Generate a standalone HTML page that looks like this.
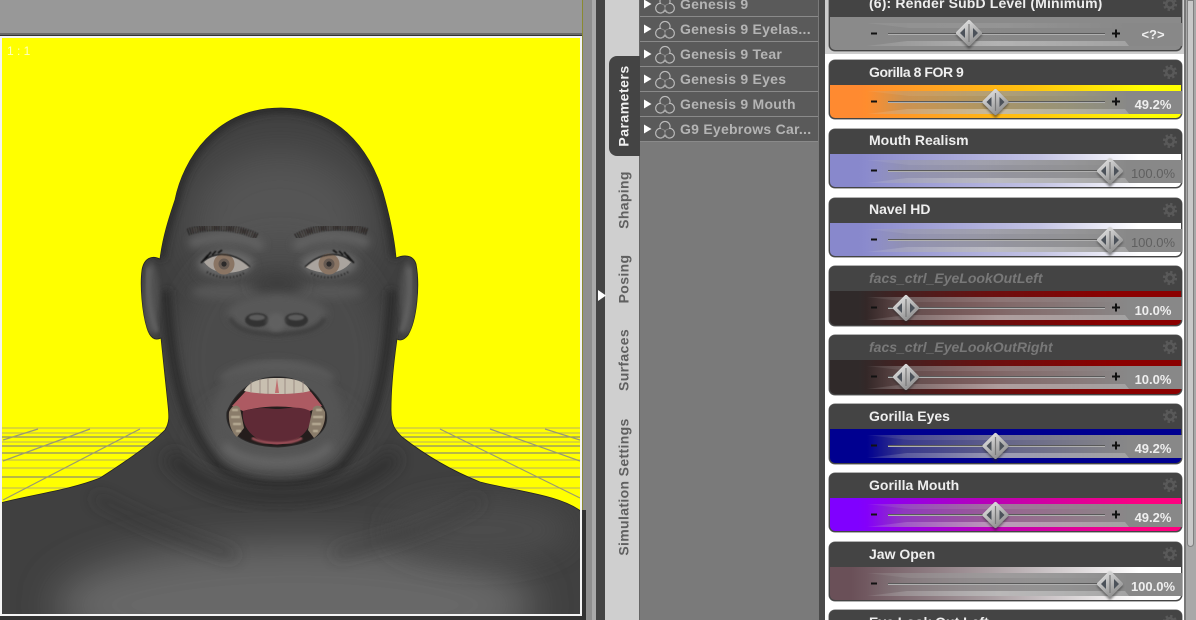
<!DOCTYPE html>
<html><head><meta charset="utf-8"><style>
html,body{margin:0;padding:0;width:1196px;height:620px;overflow:hidden}
body{position:relative;background:#999;font-family:"Liberation Sans",sans-serif}
#root{position:absolute;left:0;top:0;width:1196px;height:620px;overflow:hidden}
.a{position:absolute}
.row{position:absolute;left:640px;width:178px;height:24px;background:#5a5a5a;border-bottom:1px solid #8a8a8a}
.row b{position:absolute;left:40px;top:5px;font-size:14px;line-height:15px;color:#b4b4b4;letter-spacing:.25px;white-space:nowrap}
.row svg{position:absolute;left:3px;top:2px}
.tab{position:absolute;left:624px;transform:translate(-50%,-50%) rotate(-90deg);font-size:14px;font-weight:bold;color:#606060;white-space:nowrap;line-height:15px;letter-spacing:.35px}
.card{position:absolute;left:829px;width:353px;height:59px;border-radius:6px;overflow:hidden;background:#444;box-shadow:0 0 0 .5px #666}
.card .n{position:absolute;left:40px;top:5px;font-size:14px;font-weight:bold;line-height:15px;color:#eee;white-space:nowrap}
.card .n.i{font-style:italic;color:#787878}
.card .b{position:absolute;left:1px;top:25px;width:351px;height:33px;border-radius:0 0 5px 5px;overflow:hidden}
.card svg{position:absolute;left:0;top:0}
.card .v{position:absolute;left:284px;width:80px;top:38px;text-align:center;font-size:13px;font-weight:bold;line-height:14px;color:#eee}
.card .v.g{color:#606060;font-weight:normal}
</style></head><body><div id="root">

<svg width="0" height="0" style="position:absolute">
<defs>
<linearGradient id="ga" gradientUnits="userSpaceOnUse" x1="38" x2="300" y1="0" y2="0"><stop offset="0" stop-color="#888" stop-opacity="0"/><stop offset=".14" stop-color="#888" stop-opacity=".42"/><stop offset=".55" stop-color="#888" stop-opacity=".76"/><stop offset="1" stop-color="#888"/></linearGradient>
<linearGradient id="gl" gradientUnits="userSpaceOnUse" x1="38" x2="300" y1="0" y2="0"><stop offset="0" stop-color="#fff" stop-opacity=".08"/><stop offset=".5" stop-color="#fff" stop-opacity=".36"/><stop offset="1" stop-color="#fff" stop-opacity=".22"/></linearGradient>
<linearGradient id="gd" gradientUnits="userSpaceOnUse" x1="38" x2="300" y1="0" y2="0"><stop offset="0" stop-color="#fff" stop-opacity=".06"/><stop offset=".5" stop-color="#fff" stop-opacity=".1"/><stop offset="1" stop-color="#fff" stop-opacity="0"/></linearGradient>
<linearGradient id="tg" x1="0" y1="0" x2=".6" y2="1"><stop offset="0" stop-color="#e6e6e6"/><stop offset="1" stop-color="#949494"/></linearGradient>
<filter id="sh" x="-30%" y="-30%" width="160%" height="160%"><feGaussianBlur stdDeviation="1.1"/></filter>
<symbol id="ov" width="353" height="59" viewBox="0 0 353 59">
<rect x="38" y="31" width="315" height="23" fill="url(#ga)"/>
<polygon points="38,31 80,36 296,36 310,31" fill="url(#gd)"/>
<polygon points="38,54 78,49 296,49 300,54" fill="url(#gl)"/>
<rect x="59" y="41" width="217" height="1" fill="#5a5a5a"/><rect x="59" y="42" width="217" height="1" fill="#b0b0b0"/>
<rect x="42" y="40.5" width="6" height="2" fill="#111"/>
<rect x="283" y="40.5" width="8" height="2" fill="#111"/><rect x="286" y="37.5" width="2" height="8" fill="#111"/>
</symbol>
<symbol id="th" width="34" height="34" viewBox="-17 -17 34 34" overflow="visible">
<polygon points="0,-11 12,2 0,15 -12,2" fill="#222" stroke="#222" stroke-width="2" stroke-linejoin="round" opacity=".5" filter="url(#sh)"/>
<polygon points="0,-11 11,0 0,11 -11,0" fill="url(#tg)" stroke="url(#tg)" stroke-width="4" stroke-linejoin="round"/>
<polygon points="-4,-5 -4,5 -9,0" fill="#4c525a"/><polygon points="4,-5 4,5 9,0" fill="#4c525a"/>
<rect x="-.6" y="-9" width="1.2" height="18" fill="#787878"/>
</symbol>
<symbol id="ge" width="16" height="16" viewBox="-8 -8 16 16">
<circle r="3.8" fill="none" stroke="#595959" stroke-width="2.6"/>
<circle r="6" fill="none" stroke="#595959" stroke-width="2.2" stroke-dasharray="2.4 2.3"/>
</symbol>
<symbol id="ic" width="24" height="22" viewBox="0 0 24 22">
<g fill="none" stroke="#bcbcbc" stroke-width="1.2"><circle cx="11" cy="7.5" r="5"/><circle cx="6.5" cy="14.2" r="4.8"/><circle cx="15.5" cy="14.2" r="4.8"/></g>
<g fill="#5a5a5a"><circle cx="11" cy="7.5" r="4.4"/><circle cx="6.5" cy="14.2" r="4.2"/><circle cx="15.5" cy="14.2" r="4.2"/></g>
<path d="M11 11.5V15M11 11.5L7.5 9.8M11 11.5L14.5 9.8M11 15L8 18.5M11 15L14 18.5" stroke="#8a8a8a" stroke-width=".8" fill="none"/>
</symbol>
<symbol id="ar" width="10" height="10" viewBox="0 0 10 10"><polygon points="1,0.5 8.5,5 1,9.5" fill="#fff"/></symbol>
</defs></svg>

<!-- left viewport -->
<div class="a" style="left:0;top:0;width:582px;height:33px;background:#989898"></div>
<div class="a" style="left:0;top:33px;width:582px;height:2px;background:#6a6a6a"></div>
<div class="a" style="left:0;top:35px;width:582px;height:585px;background:#333"></div>
<svg class="a" style="left:0;top:0" width="582" height="620" viewBox="0 0 582 620">
<defs>
<clipPath id="vp"><rect x="2" y="38" width="578" height="576"/></clipPath>
<clipPath id="bd"><path d="M0 503 C30 495 70 490 100 478 C125 462 150 445 165 430 C170 422 169 415 168 405 L161 338 C155 341 150 338 147 328 C142 312 140 285 142 270 C144 258 152 255 160 259 C163 235 170 215 175 200 C183 160 215 108 281 108 C345 108 375 160 385 200 C389 215 394 235 396 258 C403 255 413 254 416 264 C420 285 417 320 408 335 C404 340 400 341 397 339 C394 360 391 385 391 410 C391 425 395 430 402 437 C425 455 450 470 480 482 C520 492 560 495 582 512 L582 620 L0 620Z"/></clipPath>
<filter id="b2" x="-30%" y="-30%" width="160%" height="160%"><feGaussianBlur stdDeviation="2"/></filter>
<filter id="b4" x="-40%" y="-40%" width="180%" height="180%"><feGaussianBlur stdDeviation="4"/></filter>
<filter id="b8" x="-40%" y="-40%" width="180%" height="180%"><feGaussianBlur stdDeviation="8"/></filter>
<filter id="b14" x="-50%" y="-50%" width="200%" height="200%"><feGaussianBlur stdDeviation="14"/></filter>
<filter id="b20" x="-60%" y="-60%" width="220%" height="220%"><feGaussianBlur stdDeviation="20"/></filter>
<filter id="b1"><feGaussianBlur stdDeviation=".8"/></filter>
<filter id="b05"><feGaussianBlur stdDeviation=".45"/></filter>
</defs>
<g clip-path="url(#vp)">
<rect x="2" y="38" width="578" height="576" fill="#ff0"/>
<g stroke-width="1.2" fill="none">
<g stroke="#c8c050"><path d="M0 428H582M0 433H582M0 442H582M0 460H582M0 468H582M0 488H582"/></g>
<g stroke="#8c8c70"><path d="M0 437H582M0 446H582M0 453H582M0 477H582"/></g>
<g stroke="#9a9a70"><path d="M3 440L38 429M3 461L90 429M3 500L140 429M580 440L545 429M580 461L490 429M580 498L440 429"/></g>
</g>
<path d="M0 503 C30 495 70 490 100 478 C125 462 150 445 165 430 C170 422 169 415 168 405 L161 338 C155 341 150 338 147 328 C142 312 140 285 142 270 C144 258 152 255 160 259 C163 235 170 215 175 200 C183 160 215 108 281 108 C345 108 375 160 385 200 C389 215 394 235 396 258 C403 255 413 254 416 264 C420 285 417 320 408 335 C404 340 400 341 397 339 C394 360 391 385 391 410 C391 425 395 430 402 437 C425 455 450 470 480 482 C520 492 560 495 582 512 L582 620 L0 620Z" fill="#404040" stroke="#222" stroke-width=".8"/>
<g clip-path="url(#bd)">
<ellipse cx="295" cy="605" rx="240" ry="62" fill="#686868" filter="url(#b20)"/>
<ellipse cx="480" cy="530" rx="90" ry="30" fill="#4c4c4c" filter="url(#b14)"/>
<ellipse cx="280" cy="225" rx="90" ry="75" fill="#545454" filter="url(#b20)"/>
<path d="M160 259 C163 235 170 215 175 200 C183 160 215 108 281 108 C345 108 375 160 385 200 C389 215 394 235 396 258" fill="none" stroke="#2a2a2a" stroke-width="10" filter="url(#b4)"/>
<ellipse cx="280" cy="360" rx="104" ry="118" fill="#4c4c4c" filter="url(#b14)"/>
<ellipse cx="277" cy="440" rx="72" ry="42" fill="#585858" filter="url(#b14)"/>
<path d="M166 290 C170 360 180 420 215 462 C240 492 320 492 345 462 C380 420 388 360 392 290" fill="none" stroke="#2c2c2c" stroke-width="9" filter="url(#b4)"/>
<path d="M170 455 C210 510 350 510 395 455" fill="none" stroke="#2e2e2e" stroke-width="14" filter="url(#b8)"/>
<path d="M95 497 C130 515 170 535 235 556" fill="none" stroke="#343434" stroke-width="6" filter="url(#b8)"/>
<path d="M480 500 C440 525 390 540 335 554" fill="none" stroke="#3a3a3a" stroke-width="6" filter="url(#b8)"/>
<!-- ears -->
<ellipse cx="151" cy="298" rx="8" ry="36" fill="#505050" filter="url(#b2)"/>
<ellipse cx="408" cy="298" rx="8" ry="36" fill="#505050" filter="url(#b2)"/>
<path d="M149 268 C147 290 150 318 157 332" fill="none" stroke="#626262" stroke-width="5" filter="url(#b2)"/>
<path d="M409 268 C411 290 408 318 401 332" fill="none" stroke="#626262" stroke-width="5" filter="url(#b2)"/>
<!-- brow and sockets -->
<path d="M190 244 C220 232 250 236 262 248 M295 248 C310 234 345 232 368 244" fill="none" stroke="#626262" stroke-width="10" filter="url(#b4)"/>
<ellipse cx="226" cy="270" rx="30" ry="14" fill="#454545" filter="url(#b4)"/>
<ellipse cx="329" cy="270" rx="30" ry="14" fill="#454545" filter="url(#b4)"/>
<ellipse cx="226" cy="264" rx="28" ry="13" fill="#6a6a6a" filter="url(#b4)"/>
<ellipse cx="329" cy="264" rx="28" ry="13" fill="#6a6a6a" filter="url(#b4)"/>
<ellipse cx="226" cy="292" rx="34" ry="7" fill="#565656" filter="url(#b4)"/>
<ellipse cx="329" cy="292" rx="34" ry="7" fill="#565656" filter="url(#b4)"/>
<!-- nose -->
<ellipse cx="277" cy="283" rx="26" ry="12" fill="#3e3e3e" filter="url(#b8)"/>
<ellipse cx="277" cy="314" rx="50" ry="20" fill="#585858" filter="url(#b4)"/>
<path d="M230 318 C238 334 262 333 277 335 C292 333 316 334 325 318" fill="none" stroke="#383838" stroke-width="3.5" filter="url(#b2)"/>
<ellipse cx="257" cy="320" rx="12" ry="7" fill="#303030" filter="url(#b1)"/>
<ellipse cx="296" cy="320" rx="12" ry="7" fill="#303030" filter="url(#b1)"/>
<ellipse cx="257" cy="317.5" rx="8" ry="3" fill="#5c5c5c" filter="url(#b1)"/>
<ellipse cx="296" cy="317.5" rx="8" ry="3" fill="#5c5c5c" filter="url(#b1)"/>
<ellipse cx="276" cy="322" rx="9" ry="9" fill="#606060" filter="url(#b2)"/>
<!-- lips -->
<ellipse cx="277" cy="412" rx="64" ry="52" fill="#545454" filter="url(#b4)"/>
<path d="M222 380 C235 360 320 360 332 380" fill="none" stroke="#5e5e5e" stroke-width="6" filter="url(#b4)"/>
<path d="M225 445 C240 468 315 468 330 445" fill="none" stroke="#666" stroke-width="8" filter="url(#b4)"/>
</g>
<!-- eyebrows -->
<g fill="none" filter="url(#b05)">
<path d="M188 232 C205 226 235 225 258 237" stroke="#1c1816" stroke-width="7" stroke-dasharray=".9 1.5"/>
<path d="M190 231 C208 226 235 226 256 236" stroke="#3a3432" stroke-width="4" stroke-dasharray="1.2 1.7" stroke-dashoffset="1"/>
<path d="M296 237 C315 226 345 224 368 232" stroke="#1c1816" stroke-width="7" stroke-dasharray=".9 1.5"/>
<path d="M298 236 C316 226 345 225 366 231" stroke="#3a3432" stroke-width="4" stroke-dasharray="1.2 1.7" stroke-dashoffset="1"/>
</g>
<!-- eyes -->
<path d="M204 262 C215 252 235 253 250 267 C235 275 214 276 204 262Z" fill="#aaa49e"/>
<path d="M305 267 C320 253 340 252 351 262 C341 276 320 275 305 267Z" fill="#aaa49e"/>
<circle cx="224" cy="264" r="10.5" fill="#8a7564"/><circle cx="224" cy="264" r="5.5" fill="#665a52"/><circle cx="224" cy="264" r="2.6" fill="#2c2a2a"/>
<circle cx="329" cy="264" r="10.5" fill="#8a7564"/><circle cx="329" cy="264" r="5.5" fill="#665a52"/><circle cx="329" cy="264" r="2.6" fill="#2c2a2a"/>
<g fill="none" filter="url(#b05)">
<path d="M203 261 C215 251 235 252 250 267" stroke="#1c1c1c" stroke-width="1.2"/>
<path d="M351 261 C340 251 320 252 305 267" stroke="#1c1c1c" stroke-width="1.2"/>
<path d="M201 263 L208 255 M206 258 L211 252 M212 255 L216 251 M218 253 L222 250" stroke="#111" stroke-width="1.5"/>
<path d="M354 263 L347 255 M349 258 L344 252 M343 255 L339 251 M337 253 L333 250" stroke="#111" stroke-width="1.5"/>
<path d="M207 272 C218 279 235 279 244 273" stroke="#222" stroke-width="2" stroke-dasharray="1 2.4"/>
<path d="M348 272 C337 279 320 279 311 273" stroke="#222" stroke-width="2" stroke-dasharray="1 2.4"/>
</g>
<!-- mouth -->
<path d="M277 377 C300 376 318 392 326 412 C330 430 315 445 278 447 C240 446 225 430 227 412 C235 392 255 376 277 377Z" fill="#241d1c" stroke="#2b2b2b" stroke-width="1"/>
<path d="M245 392 C255 383 300 383 311 392 L322 406 L310 411 C290 405 265 405 243 411 L232 406Z" fill="#ad5a62"/>
<path d="M244 391 C250 380 262 378 277 378 C292 378 305 380 310 391 C295 395 260 395 244 391Z" fill="#c8bfb0"/>
<path d="M251 381V392M260 379V394M268 378V394M285 378V394M294 379V394M303 381V392" stroke="#8a7a72" stroke-width=".7"/>
<path d="M277 378L275 393H279Z" fill="#c07070"/>
<path d="M243 411 C262 406 270 409 277 409 C285 409 300 405 310 411 C313 425 306 441 277 445 C252 442 241 426 243 411Z" fill="#5f2a36"/>
<path d="M252 438 C265 445 290 445 302 438" fill="none" stroke="#9c5058" stroke-width="2.5" filter="url(#b1)"/>
<path d="M229 412 C232 405 237 404 240 408 L244 428 L237 437 C231 432 228 422 229 412Z" fill="#8a7c6a"/>
<path d="M325 412 C322 405 316 404 313 408 L308 430 L314 438 C322 432 326 422 325 412Z" fill="#8a7c6a"/>
<g fill="none" stroke="#b8ac94" stroke-width="2.2" filter="url(#b05)"><path d="M232 410H238M231 417H240M233 424H241M236 431H241"/><path d="M316 410H322M313 417H323M312 424H321M313 431H318"/></g>
</g>
<rect x="1" y="37" width="580" height="578" fill="none" stroke="#f4f4f4" stroke-width="2"/>
<text x="7" y="55" font-family="Liberation Sans" font-size="12" fill="#fff" opacity=".75">1 : 1</text>
</svg>

<!-- divider strips -->
<div class="a" style="left:582px;top:0;width:1px;height:620px;background:#8a8a30"></div>
<div class="a" style="left:583px;top:0;width:9px;height:620px;background:#8f8f8f"></div>
<div class="a" style="left:582px;top:510px;width:4px;height:110px;background:#333"></div>
<div class="a" style="left:592px;top:0;width:4px;height:620px;background:#aaa"></div>
<div class="a" style="left:596px;top:0;width:9px;height:620px;background:#444"></div>
<div class="a" style="left:605px;top:0;width:34px;height:620px;background:#cfcfcf;border-right:1px solid #666"></div>
<svg class="a" style="left:598px;top:290px" width="9" height="11"><polygon points="0,0 8,5.5 0,11" fill="#fff"/></svg>

<!-- tabs -->
<div class="a" style="left:609px;top:56px;width:31px;height:100px;background:#444;border-radius:8px 0 0 8px"></div>
<div class="tab" style="top:106px;color:#f0f0f0;letter-spacing:.5px">Parameters</div>
<div class="tab" style="top:200px">Shaping</div>
<div class="tab" style="top:279px">Posing</div>
<div class="tab" style="top:360px">Surfaces</div>
<div class="tab" style="top:487px">Simulation Settings</div>

<!-- list -->
<div class="a" style="left:640px;top:0;width:179px;height:620px;background:#7a7a7a"></div>
<div class="row" style="top:-8px"><svg width="34" height="22"><use href="#ar" x="0" y="5"/><use href="#ic" x="11" y="0"/></svg><b>Genesis 9</b></div>
<div class="row" style="top:17px"><svg width="34" height="22"><use href="#ar" x="0" y="5"/><use href="#ic" x="11" y="0"/></svg><b>Genesis 9 Eyelas...</b></div>
<div class="row" style="top:42px"><svg width="34" height="22"><use href="#ar" x="0" y="5"/><use href="#ic" x="11" y="0"/></svg><b>Genesis 9 Tear</b></div>
<div class="row" style="top:67px"><svg width="34" height="22"><use href="#ar" x="0" y="5"/><use href="#ic" x="11" y="0"/></svg><b>Genesis 9 Eyes</b></div>
<div class="row" style="top:92px"><svg width="34" height="22"><use href="#ar" x="0" y="5"/><use href="#ic" x="11" y="0"/></svg><b>Genesis 9 Mouth</b></div>
<div class="row" style="top:117px"><svg width="34" height="22"><use href="#ar" x="0" y="5"/><use href="#ic" x="11" y="0"/></svg><b>G9 Eyebrows Car...</b></div>

<!-- right panel -->
<div class="a" style="left:819px;top:0;width:6px;height:620px;background:#4a4a4a"></div>
<div class="a" style="left:825px;top:0;width:359px;height:620px;background:#fff"></div>
<div class="a" style="left:825px;top:0;width:359px;height:54px;background:#cdcdcd"></div>
<div class="a" style="left:1184px;top:0;width:2px;height:620px;background:#777"></div>
<div class="a" style="left:1186px;top:0;width:10px;height:620px;background:#a8a8a8"></div>
<div class="a" style="left:1187px;top:0;width:7px;height:547px;background:#c8c8c8;border-radius:0 0 4px 4px;border:1px solid #808080;box-sizing:border-box"></div>

<div class="card" style="top:-8px;height:59px"><div class="b" style="background:#8a8a8a"></div>
<svg width="353" height="59"><use href="#ov"/><use href="#th" x="123" y="24"/><use href="#ge" x="333" y="4"/></svg>
<div class="n" style="top:4px;letter-spacing:.15px">(6): Render SubD Level (Minimum)</div><div class="v" style="color:#f0f0f0;top:36px">&lt;?&gt;</div></div>

<div class="card" style="top:60px"><div class="b" style="background:linear-gradient(90deg,#ff8a30 0,#ff8a30 8%,#ffc010 55%,#ff0 90%)"></div>
<svg width="353" height="59"><use href="#ov"/><use href="#th" x="149.5" y="25"/><use href="#ge" x="333" y="4"/></svg>
<div class="n" style="letter-spacing:-.45px">Gorilla 8 FOR 9</div><div class="v">49.2%</div></div>

<div class="card" style="top:129px"><div class="b" style="background:linear-gradient(90deg,#8888cc 0,#8888cc 8%,#c4c4e4 60%,#fff 88%)"></div>
<svg width="353" height="59"><use href="#ov"/><use href="#th" x="264" y="25"/><use href="#ge" x="333" y="4"/></svg>
<div class="n" style="top:4px">Mouth Realism</div><div class="v g">100.0%</div></div>

<div class="card" style="top:198px"><div class="b" style="background:linear-gradient(90deg,#8888cc 0,#8888cc 8%,#c4c4e4 60%,#fff 88%)"></div>
<svg width="353" height="59"><use href="#ov"/><use href="#th" x="264" y="25"/><use href="#ge" x="333" y="4"/></svg>
<div class="n" style="top:4px">Navel HD</div><div class="v g">100.0%</div></div>

<div class="card" style="top:266px;height:60px"><div class="b" style="height:34px;background:linear-gradient(90deg,#302a2a 0,#302a2a 8%,#6a1010 45%,#8b0000 80%)"></div>
<svg width="353" height="59"><use href="#ov"/><use href="#th" x="60" y="25"/><use href="#ge" x="333" y="4"/></svg>
<div class="n i">facs_ctrl_EyeLookOutLeft</div><div class="v">10.0%</div></div>

<div class="card" style="top:335px;height:60px"><div class="b" style="height:34px;background:linear-gradient(90deg,#302a2a 0,#302a2a 8%,#6a1010 45%,#8b0000 80%)"></div>
<svg width="353" height="59"><use href="#ov"/><use href="#th" x="60" y="25"/><use href="#ge" x="333" y="4"/></svg>
<div class="n i">facs_ctrl_EyeLookOutRight</div><div class="v">10.0%</div></div>

<div class="card" style="top:404px;height:60px"><div class="b" style="height:34px;background:#000090"></div>
<svg width="353" height="59"><use href="#ov"/><use href="#th" x="149.5" y="25"/><use href="#ge" x="333" y="4"/></svg>
<div class="n">Gorilla Eyes</div><div class="v">49.2%</div></div>

<div class="card" style="top:473px;height:59px"><div class="b" style="background:linear-gradient(90deg,#8000ff 0,#8000ff 8%,#c000b0 50%,#ff0080 90%)"></div>
<svg width="353" height="59"><use href="#ov"/><use href="#th" x="149.5" y="25"/><use href="#ge" x="333" y="4"/></svg>
<div class="n">Gorilla Mouth</div><div class="v">49.2%</div></div>

<div class="card" style="top:542px;height:59px"><div class="b" style="background:linear-gradient(90deg,#6a5058 0,#6a5058 6%,#a89ca0 45%,#fff 88%)"></div>
<svg width="353" height="59"><use href="#ov"/><use href="#th" x="264" y="25"/><use href="#ge" x="333" y="4"/></svg>
<div class="n">Jaw Open</div><div class="v">100.0%</div></div>

<div class="card" style="top:610px;height:10px;border-radius:6px 6px 0 0"><svg width="353" height="10"><use href="#ge" x="333" y="4"/></svg>
<div class="n" style="height:5px;overflow:hidden;top:5px">Eye Look Out Left</div></div>

</div></body></html>
